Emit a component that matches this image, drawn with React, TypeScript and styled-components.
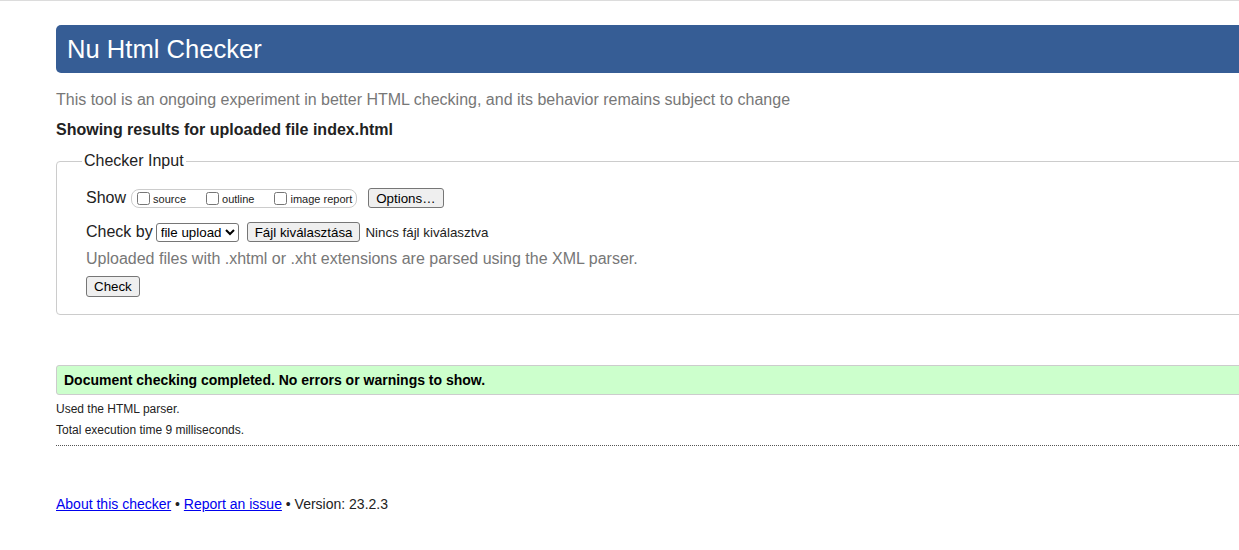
import React from "react";
import styled, { createGlobalStyle } from "styled-components";

const GlobalStyle = createGlobalStyle`
  html, body { margin: 0; padding: 0; overflow: hidden; }
  body {
    background: #fff;
    border-top: 1px solid #dcdcdc;
    font-family: "Liberation Sans", Arial, sans-serif;
    color: #222;
  }
`;

const Main = styled.main`
  margin-left: 56px;
  margin-right: -80px;
  padding-top: 24px;
`;

const Header = styled.h1`
  margin: 0;
  height: 48px;
  line-height: 48px;
  padding: 0 11px;
  background: #365d95;
  color: #fff;
  font-size: 25.6px;
  font-weight: normal;
  border-radius: 5px;
`;

const Intro = styled.p`
  margin: 18px 0 0;
  font-size: 16px;
  line-height: 18px;
  color: #777;
`;

const Showing = styled.p`
  margin: 12px 0 0;
  font-size: 16px;
  line-height: 18px;
  font-weight: bold;
  color: #222;
`;

const Fieldset = styled.fieldset`
  margin: 13px 0 0;
  border: 1px solid #ccc;
  border-radius: 4px;
  padding: 18px 29px 17px;
  min-width: 0;
`;

const Legend = styled.legend`
  margin-left: -4px;
  padding: 0 2px;
  font-size: 16px;
  line-height: 18px;
  color: #222;
`;

const Row = styled.div<{ $gap: number }>`
  display: flex;
  align-items: center;
  height: 20px;
  margin-bottom: ${(p) => p.$gap}px;
  font-size: 16px;
`;

const Label = styled.span`
  color: #222;
`;

const CheckGroup = styled.span`
  display: inline-flex;
  align-items: center;
  height: 17px;
  margin-left: 5px;
  padding: 0 4px 0 1px;
  border: 1px solid #ccc;
  border-radius: 8px;
`;

const Option = styled.label<{ $last?: boolean }>`
  display: inline-flex;
  align-items: center;
  font-size: 11px;
  line-height: 13px;
  padding-top: 2px;
  color: #222;
  margin-right: ${(p) => (p.$last ? 0 : 16)}px;
  input {
    margin: -2px 3px 0 4px;
    width: 13px;
    height: 13px;
  }
`;

const Button = styled.button<{ $ml: number }>`
  margin-left: ${(p) => p.$ml}px;
  height: ${(p) => (p.$ml === 0 ? 21 : 20)}px;
  padding: 0 7px;
  font-family: "Liberation Sans", Arial, sans-serif;
  font-size: 13.33px;
  color: #000;
  background: #efefef;
  border: 1px solid #767676;
  border-radius: 3px;
`;

const Select = styled.select`
  margin-left: 3px;
  height: 19px;
  font-family: "Liberation Sans", Arial, sans-serif;
  font-size: 13.33px;
  color: #000;
  background: #fff;
  border: 1px solid #767676;
  border-radius: 3px;
`;

const NoFile = styled.span`
  margin-left: 5px;
  font-size: 13.33px;
  color: #222;
`;

const Hint = styled.p`
  margin: 0 0 8px;
  font-size: 16px;
  line-height: 18px;
  color: #777;
`;

const Success = styled.p`
  margin: 50px 0 0;
  height: 28px;
  line-height: 28px;
  padding: 0 7px;
  background: #ccffcc;
  border: 1px solid #ccc;
  border-radius: 3px;
  font-size: 14px;
  font-weight: bold;
  color: #000;
`;

const Detail = styled.p`
  margin: 0;
  font-size: 12px;
  line-height: 21px;
  color: #222;
`;

const Details = styled.div`
  padding-top: 4px;
  padding-bottom: 4px;
  border-bottom: 1px dotted #555;
`;

const Footer = styled.p`
  margin: 50px 0 0;
  font-size: 14px;
  line-height: 16px;
  color: #222;
  a { color: #0000ee; text-decoration: underline; }
`;

export default function App() {
  return (
    <>
      <GlobalStyle />
      <Main>
        <Header>Nu Html Checker</Header>
        <Intro>
          This tool is an ongoing experiment in better HTML checking, and its behavior remains subject to change
        </Intro>
        <Showing>Showing results for uploaded file index.html</Showing>
        <Fieldset>
          <Legend>Checker Input</Legend>
          <Row $gap={14}>
            <Label>Show</Label>
            <CheckGroup>
              <Option>
                <input type="checkbox" />
                source
              </Option>
              <Option>
                <input type="checkbox" />
                outline
              </Option>
              <Option $last>
                <input type="checkbox" />
                image report
              </Option>
            </CheckGroup>
            <Button $ml={11}>Options…</Button>
          </Row>
          <Row $gap={8}>
            <Label>Check by</Label>
            <Select defaultValue="file">
              <option value="file">file upload</option>
            </Select>
            <Button $ml={8}>Fájl kiválasztása</Button>
            <NoFile>Nincs fájl kiválasztva</NoFile>
          </Row>
          <Hint>Uploaded files with .xhtml or .xht extensions are parsed using the XML parser.</Hint>
          <Button $ml={0}>Check</Button>
        </Fieldset>
        <Success>Document checking completed. No errors or warnings to show.</Success>
        <Details>
          <Detail>Used the HTML parser.</Detail>
          <Detail>Total execution time 9 milliseconds.</Detail>
        </Details>
        <Footer>
          <a href="#about">About this checker</a> • <a href="#issue">Report an issue</a> • Version: 23.2.3
        </Footer>
      </Main>
    </>
  );
}
